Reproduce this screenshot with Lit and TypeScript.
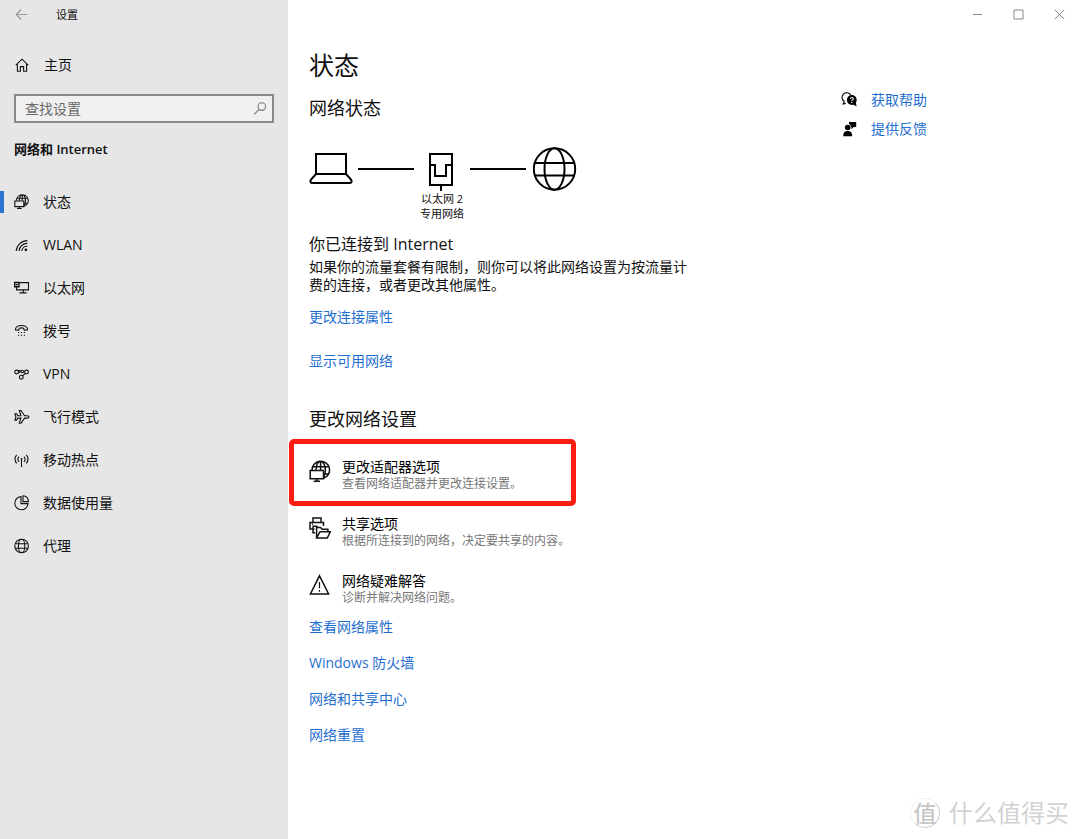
import { LitElement, html, svg, css } from "lit";
import { customElement, state } from "lit/decorators.js";

const ICONS: Record<string, unknown> = {
  back: svg`<path d="M2.200 7.500H13.200M7.200 2.500L2.200 7.500l5 5"/>`,
  home: svg`<path d="M1.800 8.200L8 2.200l6.200 6M3.400 7v7.200h3V9.600h3.200v4.600h3V7"/>`,
  search: svg`<circle cx="10.800" cy="5.600" r="3.800"/><path d="M8.200 8.400L3.200 13.400"/>`,
  netGlobe: svg`<path d="M2.400 6.800A5.900 5.900 0 1 1 10.200 12.200M5.200 6.800C5.400 3.200 6.600 .9 8.200 .9c1.900 0 3.200 2.700 3.200 5.900 0 1.900-.4 3.500-1.200 4.600M8.200 .9v5.900M3.200 4.300h10.200M10.200 9.300h3.200"/><path d="M.8 7h9v5.600h-9zM5.300 12.600v1.900M3 14.500h4.600"/>`,
  wlan: svg`<path d="M2.200 14A11.200 11.200 0 0 1 13.400 3.600M5 14A8.200 8.200 0 0 1 13.400 6.400M7.800 14A5.400 5.400 0 0 1 13.400 9.200"/><circle cx="11.900" cy="12.800" r="1.400" fill="currentColor" stroke="none"/>`,
  ethernet: svg`<path d="M5 2.600h9.500v7.300H4.200M9.300 9.900v2.800M5.400 12.900h7.200M2.500 6.800v3.100h2"/><path d="M.6 2.500h4.400v4.200H.6zM1.800 4.600h2" stroke-width="1.400"/>`,
  dial: svg`<path d="M1.500 6.900C.9 4 4 2.500 7.500 2.500s6.600 1.500 6 4.400l-3.200.3-.7-2c-1.400-.4-2.800-.4-4.200 0l-.7 2z"/><path d="M4 9.500h1.200M6.900 9.500h1.200M9.800 9.500h1.200M4 12.300h1.200M6.900 12.300h1.200M9.800 12.300h1.200"/>`,
  vpn: svg`<circle cx="2.600" cy="6" r="1.900"/><circle cx="12.500" cy="6" r="1.900"/><circle cx="7.300" cy="11.200" r="1.900"/><path d="M4 4.700c1.200-.8 2.200 0 2.800.9.900 1.200 2 1.400 2.600.4.400-.9-.3-1.800-1.300-1.700C6.800 4.500 6 6.300 4.300 7M8.600 9.800L11.200 7.400"/>`,
  plane: svg`<path d="M.9 4.700h1.500l1.500 2h3L5.300 1.500h1.700l3.600 5.200h2.500c1.300 0 1.900.6 1.900 1.200s-.6 1.200-1.900 1.200h-2.500L7 14.300H5.300L6.900 9.100h-3l-1.500 2H.9L1.900 7.900z"/>`,
  hotspot: svg`<path d="M7.500 6.500v8.500M5.100 9.800a3.400 3.400 0 0 1 0-5.200M9.900 9.800a3.400 3.400 0 0 0 0-5.200M2.700 11.400a6.400 6.400 0 0 1 0-8.600M12.300 11.400a6.400 6.400 0 0 0 0-8.600"/><circle cx="7.500" cy="6.800" r=".9" fill="currentColor" stroke="none"/>`,
  usage: svg`<path d="M7 1.600A6.600 6.600 0 1 0 14 8.600H7z"/><path d="M9 6.600V.8c3 .2 5.300 2.600 5.500 5.800z"/>`,
  globe: svg`<circle cx="7.600" cy="8" r="6.800"/><ellipse cx="7.600" cy="8" rx="3.200" ry="6.800"/><path d="M1.400 5.700h12.400M1.400 10.300h12.400"/>`,
  help: svg`<path d="M3.600 9.600A4.700 4.700 0 1 1 10 3.400M3.400 9l-1.200 3 2.600-.6"/><circle cx="10.800" cy="8" r="4.900" fill="currentColor" stroke="none"/><path d="M11.600 12.300l4 2.200-.8-4.800z" fill="currentColor" stroke="none"/><path d="M9.400 6.900c0-2 3-1.800 2.900 0 0 1-1.500 1-1.500 2.100M10.800 9.800V11" stroke="#fff"/>`,
  feedback: svg`<g fill="currentColor" stroke="none"><circle cx="6.700" cy="6.500" r="2.800"/><path d="M2.200 15.200c0-3.600 1.600-5.100 4.500-5.100s4.500 1.500 4.500 5.100z"/><path d="M8 .9h7.200v5.200h-2.400L10.500 8.300V6.100H9.900C9.900 4.400 9.300 3.500 8 3z"/></g>`,
};

const icon = (name: string) =>
  html`<svg class="icon" viewBox="0 0 16 16" aria-hidden="true">${ICONS[name]}</svg>`;

const adapterIcon = html`<svg class="icon-lg" viewBox="0 0 22 22" aria-hidden="true">
  <path d="M3 10.300A8.800 8.800 0 1 1 14.500 18.400M7 10.300C7.200 5 9 1.500 11.600 1.500c2.900 0 4.800 4 4.800 8.800 0 2.800-.6 5.200-1.700 6.800M11.600 1.500v8.800M4.300 6.700h15.200M14.800 13.900h4.700"/>
  <path d="M1.200 10.500h13.300v8.300H1.200zM7.800 18.800v2.700M4.600 21.200h6.400"/></svg>`;
const shareIcon = html`<svg class="icon-lg" viewBox="0 0 22 22" aria-hidden="true">
  <path d="M4 5.500V1h8v4.500M5.500 12H1V5.500h13.500V9M4 9.300h4.500M4 9.300v6.500h2.200M3 7.400h1"/>
  <path d="M7.600 21V10.500h4l1.500 1.800h5.800v2.400M7.600 21h10.700l3-6.300H11z"/></svg>`;
const warnIcon = html`<svg class="icon-lg" viewBox="0 0 22 22" aria-hidden="true">
  <path d="M10.500 1.800L19.600 20H1.400z"/><path d="M10.500 8v6.300M10.500 16v1.800" stroke-width="1.200"/></svg>`;

const NAV = [
  ["netGlobe", "状态"],
  ["wlan", "WLAN"],
  ["ethernet", "以太网"],
  ["dial", "拨号"],
  ["vpn", "VPN"],
  ["plane", "飞行模式"],
  ["hotspot", "移动热点"],
  ["usage", "数据使用量"],
  ["globe", "代理"],
];

const OPTIONS = [
  { icon: adapterIcon, title: "更改适配器选项", text: "查看网络适配器并更改连接设置。", marked: true },
  { icon: shareIcon, title: "共享选项", text: "根据所连接到的网络，决定要共享的内容。", marked: false },
  { icon: warnIcon, title: "网络疑难解答", text: "诊断并解决网络问题。", marked: false },
];

const LINKS = ["查看网络属性", "Windows 防火墙", "网络和共享中心", "网络重置"];

@customElement("app-root")
export class AppRoot extends LitElement {
  @state() private current = "状态";

  static styles = css`
    :host {
      display: flex;
      position: relative;
      min-height: 100vh;
      overflow: hidden;
      background: #fff;
      color: #111;
      font: 14px/20px "Open Sans", "Noto Sans CJK SC", sans-serif;
    }
    * { box-sizing: border-box; }
    h1, h2, h3, p { margin: 0; padding: 0; font-weight: 400; }
    button {
      border: 0; padding: 0; background: none; color: inherit;
      font: inherit; text-align: left; cursor: pointer;
    }
    a { color: #1f6fd0; text-decoration: none; }
    svg { display: block; flex: none; fill: none; stroke: currentColor; }
    .icon { width: 16px; height: 16px; stroke-width: 1.1; }
    .icon-lg { width: 22px; height: 22px; stroke-width: 1.5; }

    .side { flex: none; width: 288px; background: #e6e6e6; }
    .bar { display: flex; align-items: center; height: 30px; font-size: 11px; }
    .back { margin: 0 26px 0 14px; color: #999; }
    .home { display: flex; align-items: center; gap: 14px; height: 30px; margin: 20px 0 0 14px; }
    .search {
      display: flex; align-items: center; height: 29px; margin: 14px 14px 0;
      padding: 0 5px 0 9px; border: 2px solid #8a8a8a; background: #f0f0f0; color: #777;
    }
    .search input {
      flex: 1; min-width: 0; height: 24px; border: 0; padding: 0; outline: 0;
      background: none; color: #111; font: inherit;
    }
    .search input::placeholder { color: #6a6a6a; opacity: 1; }
    .group { margin: 16px 14px 21px; font-size: 13px; line-height: 20px; font-weight: 600; }
    .nav { display: flex; align-items: center; width: 100%; height: 43px; }
    .nav::before { content: ""; width: 4px; height: 22px; margin-right: 10px; }
    .nav.on::before { background: #2a74d2; }
    .nav .icon { margin-right: 13px; }

    .main { flex: 1; min-width: 0; }
    .controls { justify-content: flex-end; height: 29px; margin-bottom: 1px; color: #888; }
    .controls button { display: grid; place-items: center; width: 41px; height: 29px; }
    .controls svg { width: 11px; height: 11px; }
    .cols { display: flex; align-items: flex-start; padding-left: 21px; }
    .content { flex: 1; min-width: 0; padding: 18px 0 40px; }
    h1 { font-size: 25px; line-height: 34px; }
    h2 { font-size: 18px; line-height: 24px; }
    h3 { margin-top: 12px; font-size: 16px; line-height: 22px; }
    .sub { margin-top: 14px; }
    .section { margin: 36px 0 27px; }
    .diagram { display: flex; margin-top: 27px; }
    .diagram svg { width: 44px; height: 44px; stroke: #000; stroke-width: 2; }
    .wire { width: 56px; height: 2px; margin-top: 21px; background: #000; }
    .pc { margin-right: 5px; }
    .world { margin-left: 7px; }
    .node { width: 56px; display: flex; flex-direction: column; align-items: center; font-size: 11px; line-height: 15px; }
    .para { max-width: 384px; margin: 3px 0 13px; line-height: 18px; }
    .line { display: block; width: max-content; }
    .line + .line { margin-top: 24px; }
    .options { display: grid; justify-items: start; gap: 23px; }
    .option { position: relative; display: flex; align-items: flex-start; gap: 11px; }
    .option svg { margin-top: 2px; }
    .option b { display: block; font-weight: 400; line-height: 18px; color: #000; }
    .option small { display: block; font-size: 12px; line-height: 16px; color: #777; }
    .mark {
      position: absolute; left: -20px; top: -19px; width: 287px; height: 67px;
      border: 5px solid #fb1d12; border-radius: 5px; pointer-events: none;
    }
    .more { display: grid; gap: 16px; margin-top: 11px; justify-items: start; }
    .aside { flex: none; display: grid; gap: 9px; width: 239px; padding-top: 60px; }
    .aside a { display: flex; align-items: center; gap: 14px; }
    .aside .icon { color: #000; }

    .stamp {
      position: absolute; right: 11px; bottom: 9px; display: flex; align-items: center; gap: 9px;
      color: #d2d2d2; font-size: 24px; line-height: 34px;
    }
    .seal {
      display: grid; place-items: center; width: 30px; height: 30px; border-radius: 50%;
      border: 1px solid #f0f0f0; border-right-color: #ccc; border-bottom-color: #ccc;
      color: #c8c8c8; font-size: 23px; line-height: 28px; font-weight: 500;
    }
  `;

  render() {
    return html`
      <aside class="side">
        <div class="bar">
          <button class="back" aria-label="后退">${icon("back")}</button>
          <span>设置</span>
        </div>
        <button class="home">${icon("home")}<span>主页</span></button>
        <label class="search">
          <input type="text" placeholder="查找设置" aria-label="查找设置" />${icon("search")}
        </label>
        <h2 class="group">网络和 Internet</h2>
        <nav>
          ${NAV.map(
            ([glyph, label]) => html`<button
              class="nav ${label === this.current ? "on" : ""}"
              @click=${() => (this.current = label)}
            >${icon(glyph)}<span>${label}</span></button>`
          )}
        </nav>
      </aside>

      <div class="main">
        <div class="bar controls">
          <button aria-label="最小化"><svg viewBox="0 0 11 11"><path d="M1 5.500h9"/></svg></button>
          <button aria-label="最大化"><svg viewBox="0 0 11 11"><path d="M1 1h9v9H1z"/></svg></button>
          <button aria-label="关闭"><svg viewBox="0 0 11 11"><path d="M.8.8l9.400 9.400M10.200.8L.8 10.200"/></svg></button>
        </div>
        <div class="cols">
          <main class="content">
            <h1>状态</h1>
            <h2 class="sub">网络状态</h2>
            <div class="diagram">
              <svg class="pc" viewBox="0 0 44 44"><path d="M7 7h30v20H7zM7 27L2 32.500c-1.200 2-.5 3.500 1.500 3.500h37c2 0 2.700-1.500 1.500-3.500L37 27"/></svg>
              <div class="wire"></div>
              <div class="node">
                <svg viewBox="0 0 44 44"><path d="M10 7h22v31H10zM10 18h5v11h11V18h6M21 38v6"/></svg>
                <span>以太网 2</span><span>专用网络</span>
              </div>
              <div class="wire"></div>
              <svg class="world" viewBox="0 0 44 44"><circle cx="21.500" cy="22" r="20.700"/><ellipse cx="21.500" cy="22" rx="10" ry="20.700"/><path d="M2 16h39M2 28.500h39"/></svg>
            </div>
            <h3>你已连接到 Internet</h3>
            <p class="para">如果你的流量套餐有限制，则你可以将此网络设置为按流量计费的连接，或者更改其他属性。</p>
            <a class="line" href="#">更改连接属性</a>
            <a class="line" href="#">显示可用网络</a>
            <h2 class="section">更改网络设置</h2>
            <div class="options">
              ${OPTIONS.map(
                (o) => html`<button class="option">
                  ${o.icon}<span><b>${o.title}</b><small>${o.text}</small></span>
                  ${o.marked ? html`<span class="mark"></span>` : ""}
                </button>`
              )}
            </div>
            <div class="more">${LINKS.map((t) => html`<a href="#">${t}</a>`)}</div>
          </main>
          <div class="aside">
            <a href="#">${icon("help")}<span>获取帮助</span></a>
            <a href="#">${icon("feedback")}<span>提供反馈</span></a>
          </div>
        </div>
      </div>

      <div class="stamp"><span class="seal">值</span><span>什么值得买</span></div>
    `;
  }
}
